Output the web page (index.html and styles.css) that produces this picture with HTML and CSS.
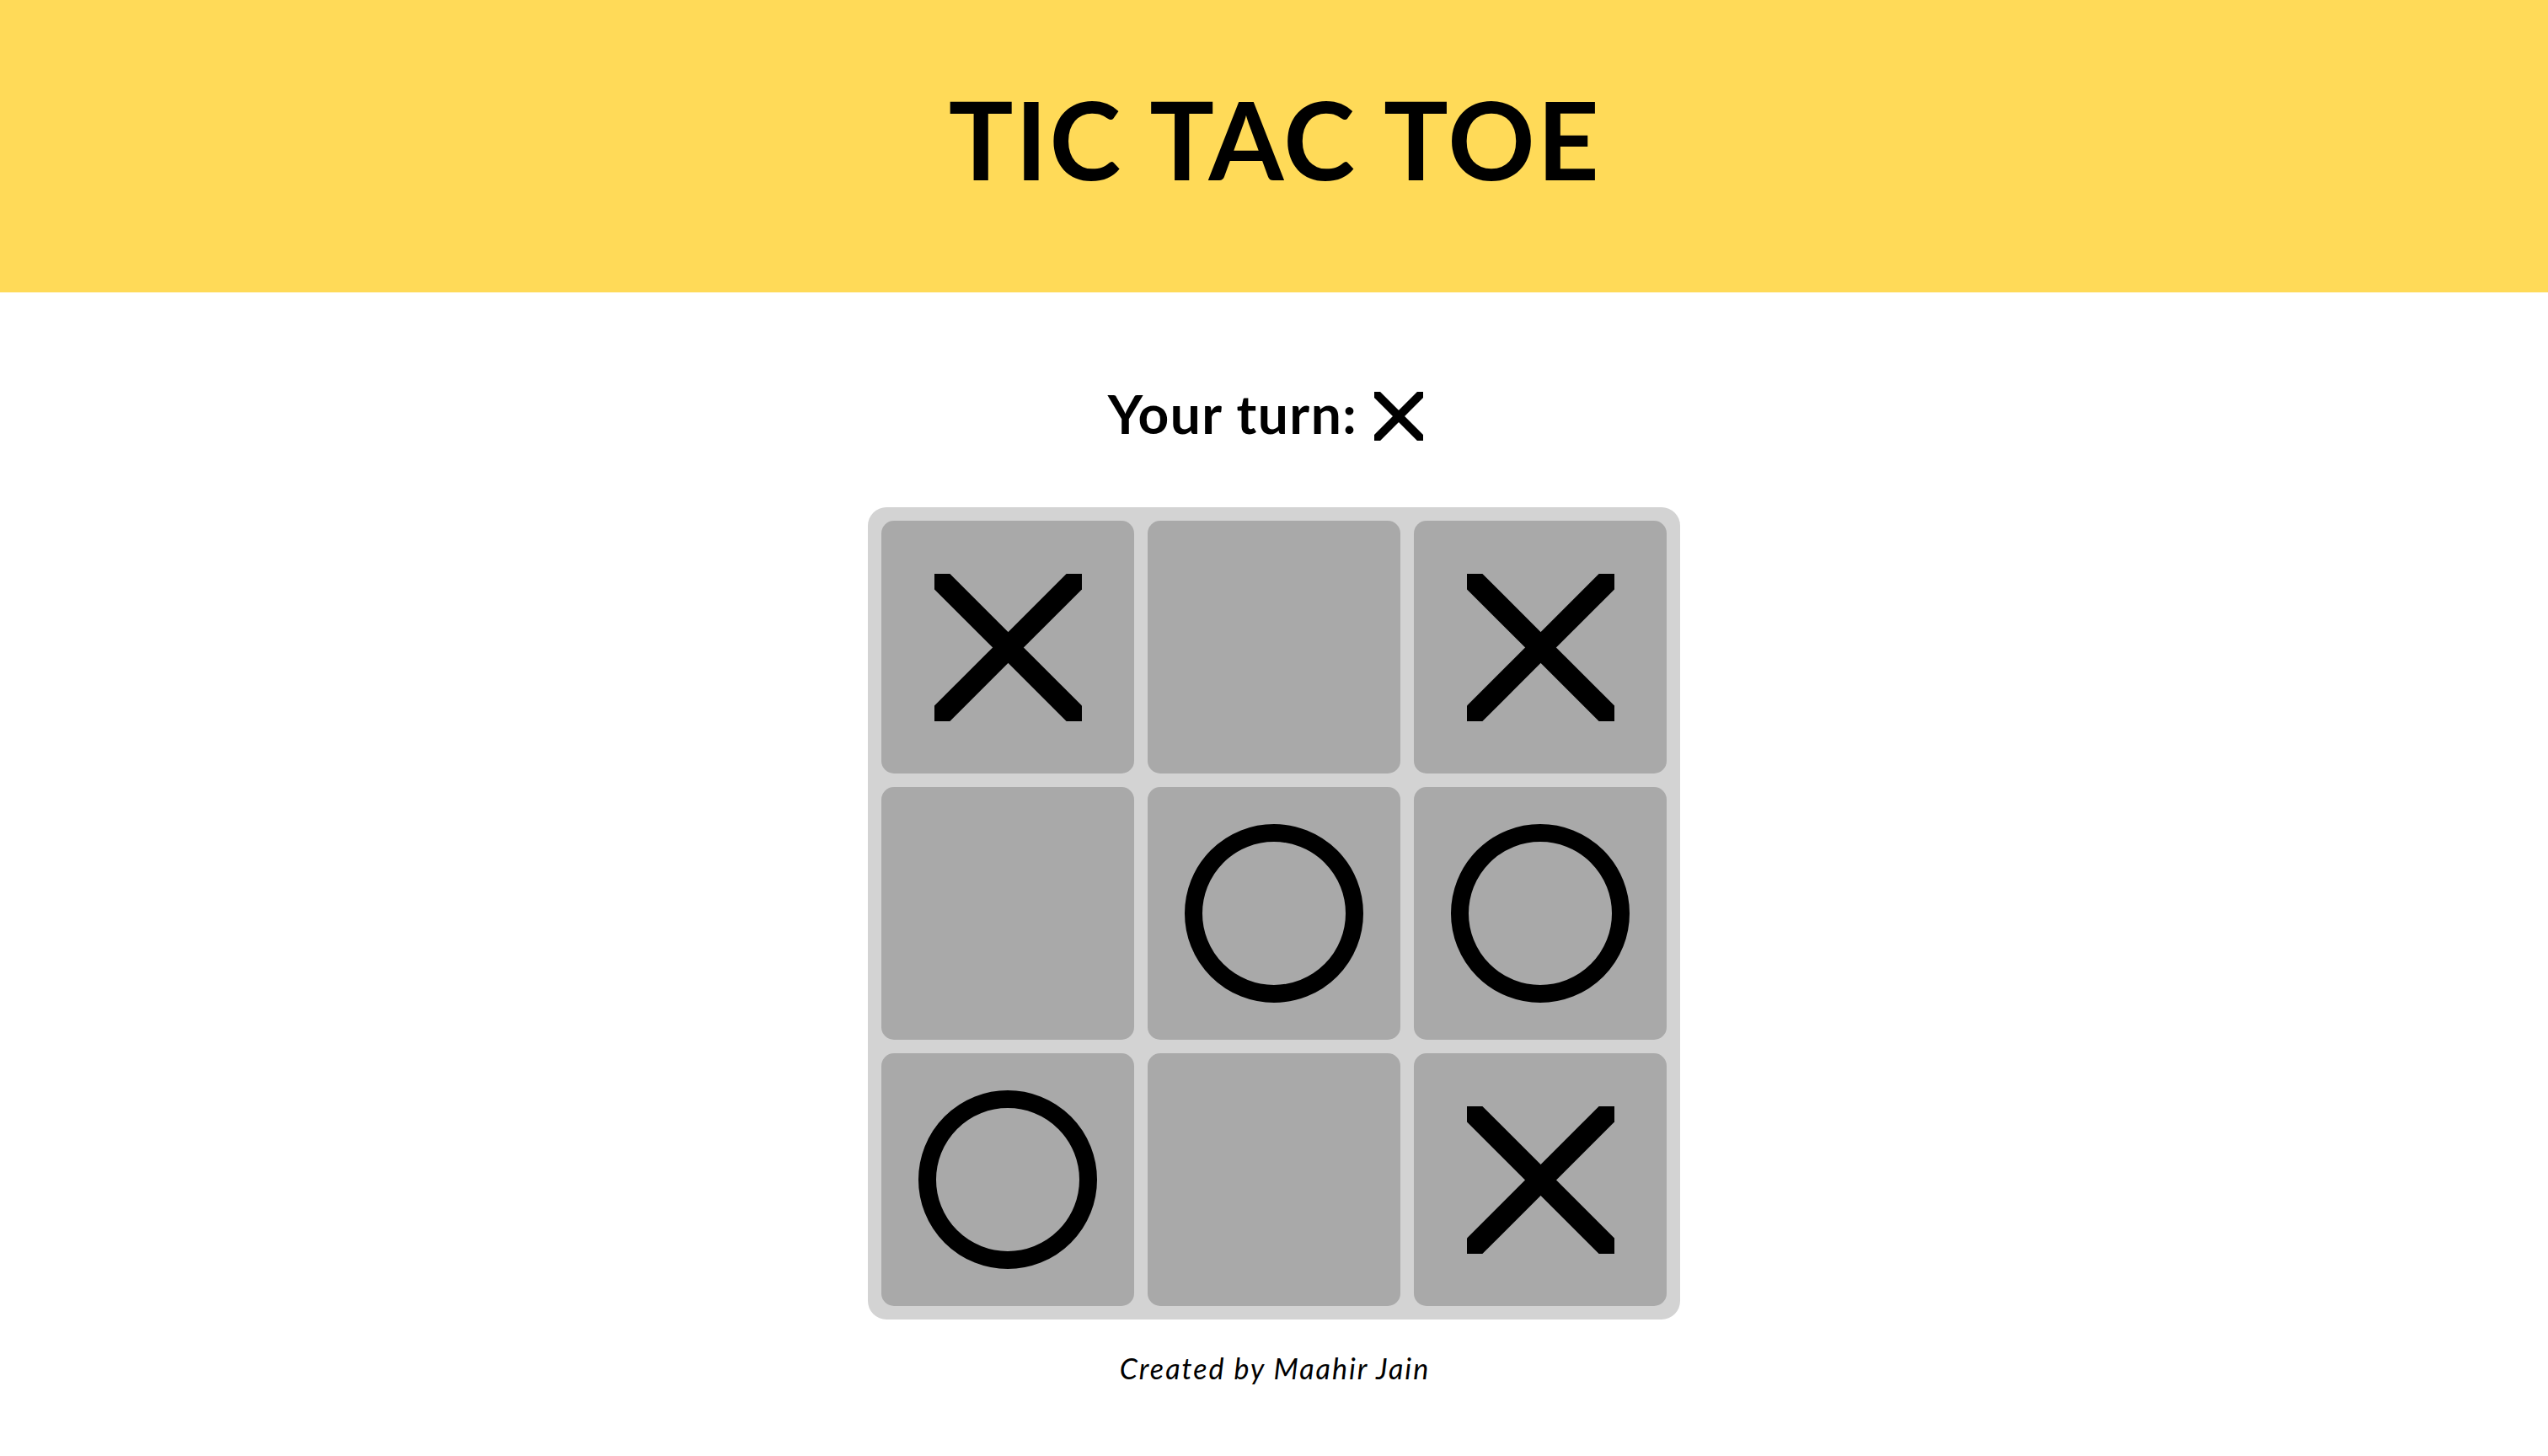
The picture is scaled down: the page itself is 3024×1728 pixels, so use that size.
FILE: index.html
```html
<!DOCTYPE html>
<html lang="en">
<head>
<meta charset="utf-8">
<title>Tic Tac Toe</title>
<link rel="stylesheet" href="styles.css">
</head>
<body>
<header class="header">
  <h1 class="title">TIC TAC TOE</h1>
</header>
<main class="main">
  <div class="turn">
    <span class="turn-label">Your turn:</span>
    <svg class="turn-mark" viewBox="0 0 58 58" aria-hidden="true">
      <line x1="0" y1="0" x2="58" y2="58"/>
      <line x1="58" y1="0" x2="0" y2="58"/>
    </svg>
  </div>
  <div class="board">
    <div class="cell"><svg class="mark-x" viewBox="0 0 175 175"><line x1="0" y1="0" x2="175" y2="175"/><line x1="175" y1="0" x2="0" y2="175"/></svg></div>
    <div class="cell"></div>
    <div class="cell"><svg class="mark-x" viewBox="0 0 175 175"><line x1="0" y1="0" x2="175" y2="175"/><line x1="175" y1="0" x2="0" y2="175"/></svg></div>
    <div class="cell"></div>
    <div class="cell"><span class="mark-o"></span></div>
    <div class="cell"><span class="mark-o"></span></div>
    <div class="cell"><span class="mark-o"></span></div>
    <div class="cell"></div>
    <div class="cell"><svg class="mark-x" viewBox="0 0 175 175"><line x1="0" y1="0" x2="175" y2="175"/><line x1="175" y1="0" x2="0" y2="175"/></svg></div>
  </div>
  <p class="credit">Created by Maahir Jain</p>
</main>
</body>
</html>
```
FILE: styles.css
```css
html, body {
  margin: 0;
  padding: 0;
  background: #ffffff;
  color: #000000;
  font-family: Lato, "Noto Sans", sans-serif;
}

.header {
  height: 347px;
  background: #ffda58;
  display: flex;
  align-items: center;
  justify-content: center;
}

.title {
  margin: 0 -2px 0 0;
  padding-bottom: 18px;
  font-size: 128px;
  font-weight: 700;
  line-height: 1;
  letter-spacing: 2.5px;
  word-spacing: 2px;
}

.main {
  display: flex;
  flex-direction: column;
  align-items: center;
  padding-top: 105px;
}

.turn {
  display: flex;
  align-items: center;
  gap: 20px;
  padding-right: 20px;
}

.turn-label {
  font-size: 64px;
  font-weight: 700;
  line-height: 77px;
  letter-spacing: 1.5px;
}

.turn-mark {
  width: 58px;
  height: 58px;
  margin-top: 7px;
  stroke: #000;
  stroke-width: 10;
  stroke-linecap: square;
}

.board {
  margin-top: 73px;
  display: grid;
  grid-template-columns: repeat(3, 300px);
  grid-template-rows: repeat(3, 300px);
  gap: 16px;
  padding: 16px;
  background: #d3d3d3;
  border-radius: 22px;
}

.cell {
  background: #a9a9a9;
  border-radius: 15px;
  display: flex;
  align-items: center;
  justify-content: center;
}

.mark-x {
  width: 175px;
  height: 175px;
  stroke: #000;
  stroke-width: 26;
  stroke-linecap: square;
}

.mark-o {
  width: 170px;
  height: 170px;
  border: 21px solid #000;
  border-radius: 50%;
}

.credit {
  margin: 37px -2px 0 0;
  font-size: 34px;
  font-style: italic;
  font-weight: 400;
  line-height: normal;
  letter-spacing: 2px;
}
```
